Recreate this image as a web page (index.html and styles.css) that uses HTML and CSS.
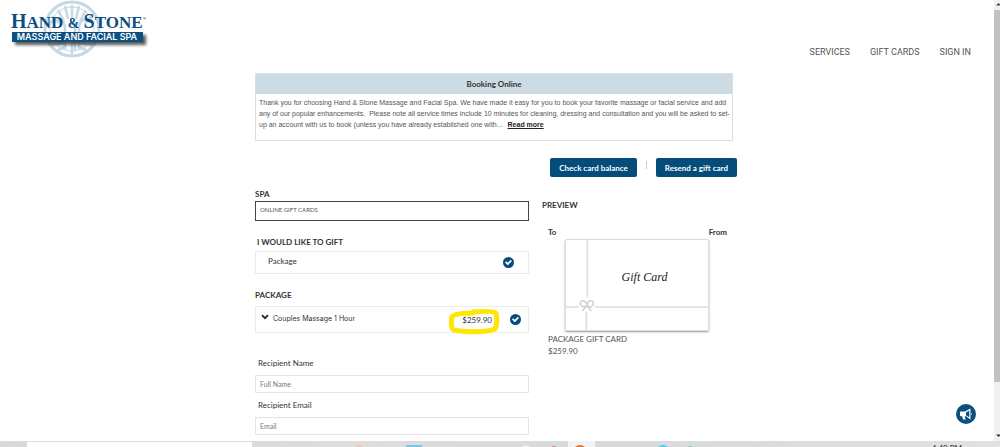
FILE: index.html
```html
<!DOCTYPE html>
<html lang="en">
<head>
<meta charset="utf-8">
<meta name="viewport" content="width=device-width, initial-scale=1">
<title>Hand &amp; Stone Gift Cards</title>
<link rel="stylesheet" href="styles.css">
</head>
<body>
<div class="viewport">
  <div class="page">
    <header class="header">
      <a class="logo" href="#" aria-label="Hand and Stone Massage and Facial Spa">
        <svg width="152" height="62" viewBox="0 0 152 62">
          <defs>
            <filter id="shadow" x="-10%" y="-30%" width="125%" height="200%">
              <feDropShadow dx="3" dy="3" stdDeviation="1.5" flood-color="#222" flood-opacity=".75"/>
            </filter>
          </defs>
          <g fill="none" stroke="#c6d8e4">
            <circle cx="72" cy="29" r="27" stroke-width="3"/>
            <circle cx="72" cy="29" r="22" stroke-width="1"/>
            <path stroke-width="2.5" d="M72 5v14M65 6l3 13M79 6l-3 13M58 10l6 11M86 10l-6 11M52 16l7 7M92 16l-7 7M50 23c8-7 14-3 15 4v22M94 23c-8-7-14-3-15 4v22M69 24h6v26M50 45l14-2M94 45l-14-2M58 50l7-3M86 50l-7-3M72 43v11"/>
          </g>
          <rect x="12" y="32" width="131" height="10" fill="#0b4f80" filter="url(#shadow)"/>
          <text class="logo-name" x="11" y="28"><tspan class="logo-cap">H</tspan>AND <tspan class="logo-amp">&amp;</tspan> <tspan class="logo-cap">S</tspan>TONE<tspan class="logo-reg" dy="-8">®</tspan></text>
          <text class="logo-tag" x="77" y="40" text-anchor="middle">MASSAGE AND FACIAL SPA</text>
        </svg>
      </a>
      <nav class="nav">
        <a href="#">SERVICES</a>
        <a href="#">GIFT CARDS</a>
        <a href="#">SIGN IN</a>
      </nav>
    </header>

    <main class="content">
      <section class="notice">
        <h1 class="notice-title">Booking Online</h1>
        <p class="notice-text">Thank you for choosing Hand &amp; Stone Massage and Facial Spa. We have made it easy for you to book your favorite massage or facial service and add any of our popular enhancements.&nbsp; Please note all service times include 10 minutes for cleaning, dressing and consultation and you will be asked to set-up an account with us to book (unless you have already established one with... <a class="read-more" href="#">Read more</a></p>
      </section>

      <div class="actions">
        <button class="btn" type="button">Check card balance</button>
        <span class="divider"></span>
        <button class="btn" type="button">Resend a gift card</button>
      </div>

      <div class="columns">
        <form class="form">
          <label class="heading" for="spa">SPA</label>
          <input class="field field-spa" id="spa" type="text" value="ONLINE GIFT CARDS">

          <h2 class="heading heading-gift">I WOULD LIKE TO GIFT</h2>
          <div class="option option-gift">
            <label for="gift-package">Package</label>
            <input class="tick" id="gift-package" type="checkbox" checked>
          </div>

          <h2 class="heading heading-package">PACKAGE</h2>
          <div class="option option-package">
            <button class="expand" type="button" aria-label="Show details">
              <svg width="8" height="6" viewBox="0 0 8 6"><path d="M1 1.200l3 3 3-3" fill="none" stroke="#222" stroke-width="1.8"/></svg>
            </button>
            <label class="option-name" for="couples">Couples Massage 1 Hour</label>
            <span class="price">
              <svg class="marker" width="52" height="28" viewBox="0 0 52 28"><path d="M25 4C37 3 47 3 48 5c1 5 1 13-1 16-8 4-32 3-41 1C3 21 3 12 4 9c2-3 10-4 21-4" fill="none" stroke="#ffe600" stroke-width="5" stroke-linejoin="round" stroke-linecap="round"/></svg>
              <span class="amount">$259.90</span>
            </span>
            <input class="tick" id="couples" type="checkbox" checked>
          </div>

          <label class="label" for="name">Recipient Name</label>
          <input class="field" id="name" type="text" placeholder="Full Name">
          <label class="label label-email" for="email">Recipient Email</label>
          <input class="field" id="email" type="email" placeholder="Email">
        </form>

        <section class="preview">
          <h2 class="heading">PREVIEW</h2>
          <div class="names"><span>To</span><span>From</span></div>
          <div class="gift-card">
            <svg class="ribbon" viewBox="0 0 143 91">
              <g fill="none" stroke="#dedede" stroke-width="1.6">
                <path d="M21.500 0V58M20.500 72V91M0 67.500H13M29 67.500H143"/>
                <path stroke="#d0d0d0" stroke-width="1.5" d="M21 66C17 69 14 66 14.500 63.500C15 60 20 60 21 66C22 60 27 60 27.500 63.500C28 66 25 69 21 66L16.500 71.500M21 66L25.500 71.500"/>
              </g>
            </svg>
            <span class="script">Gift Card</span>
          </div>
          <p class="summary">PACKAGE GIFT CARD</p>
          <p class="summary">$259.90</p>
        </section>
      </div>
    </main>

    <button class="announce" type="button" aria-label="Announcements">
      <svg width="20" height="20" viewBox="0 0 20 20"><circle cx="10" cy="10" r="10" fill="#0b4f80"/><path fill="#fff" d="M4 8.200Q4 7.500 4.700 7.500H9L14.500 4.500V15.500L10 12.300H8.600L9.700 15.600H7.200L6.100 12.300H4.700Q4 12.300 4 11.600zM15 8.600q1.500 1.400 0 2.800z"/><path fill="#0b4f80" d="M10 8.500l3.300-1.800v6.600L10 11.300z"/></svg>
    </button>
  </div>
  <div class="scrollbar">
    <svg width="6" height="10" viewBox="0 0 6 10"><path d="M2 5.500L4.500 3 7 5.500z" fill="#444"/></svg>
    <div class="thumb"></div>
    <svg width="6" height="10" viewBox="0 0 6 10"><path d="M2 3.500h5L4.500 6z" fill="#333"/></svg>
  </div>
</div>
<footer class="taskbar">
  <div class="search"></div>
  <svg class="apps" width="620" height="6" viewBox="0 0 620 6">
    <rect x="316" width="27" height="6" fill="#f3f3f3"/>
    <rect x="154" y="4" width="16" height="2" rx="1" fill="#7fc3e3"/>
    <circle cx="328" cy="11" r="7" fill="#e2733d"/>
    <circle cx="411" cy="11" r="7" fill="#5ecbe0"/>
    <circle cx="438" cy="9" r="4" fill="#8fcf9a"/>
    <circle cx="302" cy="8" r="3" fill="#dc7d76"/>
    <circle cx="274" cy="8" r="4" fill="#eef1f2"/>
    <circle cx="107" cy="8" r="4" fill="#e9c8b8"/>
  </svg>
  <span class="clock">4:49 PM</span>
</footer>
</body>
</html>
```

FILE: styles.css
```css
* {
  box-sizing: border-box;
}

body {
  margin: 0;
  height: 100vh;
  display: flex;
  flex-direction: column;
  overflow: hidden;
  background: #fff;
  color: #333;
  font-family: Lato, "Liberation Sans", sans-serif;
  font-size: 8px;
  line-height: 12px;
}

h1,
h2,
p {
  margin: 0;
}

button,
input {
  font: inherit;
  margin: 0;
}

.viewport {
  flex: 1;
  min-height: 0;
  display: flex;
}

.page {
  position: relative;
  flex: 1;
  overflow: hidden;
}

.header {
  display: flex;
  justify-content: space-between;
  align-items: flex-end;
  height: 62px;
  padding-right: 23px;
}

.logo {
  display: flex;
}

.logo-name {
  font: bold 17px "Liberation Serif", serif;
  fill: #0b4f80;
}

.logo-cap {
  font-size: 20px;
}

.logo-amp {
  font-size: 14px;
}

.logo-reg {
  font-size: 5px;
}

.logo-tag {
  font: 600 9px Inter, sans-serif;
  fill: #fff;
}

.nav {
  display: flex;
  gap: 20px;
  padding-bottom: 4px;
  font-family: Roboto, sans-serif;
  font-size: 9px;
}

.nav a {
  color: #555;
  text-decoration: none;
}

.content {
  max-width: 484px;
  margin: 11px auto 0;
}

.notice {
  margin-right: 6px;
  border: 1px solid #d5e1e9;
}

.notice-title {
  background: #cddbe4;
  font-size: 8px;
  line-height: 20px;
  text-align: center;
}

.notice-text {
  min-height: 46px;
  padding: 3px 0 9px 3px;
  font-family: "Liberation Sans", sans-serif;
  font-size: 7px;
  line-height: 11px;
  color: #555;
}

.read-more {
  margin-left: 3px;
  color: #222;
  font-weight: bold;
}

.actions {
  display: flex;
  justify-content: flex-end;
  gap: 9px;
  padding-right: 2px;
  margin-top: 17px;
}

.btn {
  height: 19px;
  padding: 0 9px;
  border: 0;
  border-radius: 2px;
  background: #044c7a;
  color: #fff;
  font-weight: bold;
}

.divider {
  width: 1px;
  height: 8px;
  margin-top: 3px;
  background: #bfcbe0;
}

.columns {
  display: flex;
  gap: 13px;
  margin-top: 11px;
}

.form {
  flex: 274;
  display: flex;
  flex-direction: column;
}

.heading {
  font-size: 8px;
  font-weight: bold;
  line-height: 12px;
}

.field {
  width: 100%;
  height: 18px;
  padding: 0 4px;
  border: 1px solid #e4e4e4;
  background: #fff;
  color: #555;
  font-size: 7px;
}

.field::placeholder {
  color: #777;
}

.field-spa {
  height: 20px;
  margin-top: 1px;
  padding-bottom: 4px;
  border-color: #444;
  font-size: 6px;
}

.heading-gift {
  margin-top: 15px;
  padding-left: 2px;
}

.heading-package {
  margin-top: 15px;
}

.option {
  display: flex;
  align-items: center;
  border: 1px solid #ececec;
}

.option-gift {
  justify-content: space-between;
  height: 23px;
  margin-top: 3px;
  padding: 0 14px 0 12px;
}

.option-gift label {
  padding-bottom: 3px;
}

.option-package {
  height: 27px;
  margin-top: 5px;
  padding: 0 7px 0 5px;
}

.option-name {
  flex: 1;
  padding: 0 0 2px 4px;
  font-family: Inter, sans-serif;
  font-size: 7px;
}

.expand {
  display: flex;
  padding: 0 0 5px;
  border: 0;
  background: none;
}

.price {
  position: relative;
  margin-right: 18px;
}

.amount {
  position: relative;
}

.marker {
  position: absolute;
  left: -14px;
  top: -6px;
}

.tick {
  appearance: none;
  display: grid;
  place-items: center;
  width: 11px;
  height: 11px;
  border-radius: 50%;
  background: #044c7a;
}

.tick:checked::before {
  content: "";
  width: 7px;
  height: 6px;
  background: #fff;
  clip-path: polygon(0 50%, 18% 30%, 40% 54%, 82% 5%, 100% 24%, 40% 95%);
}

.label {
  margin: 24px 0 6px;
  padding-left: 3px;
}

.label-email {
  margin-top: 6px;
}

.preview {
  flex: 197;
  padding-top: 11px;
}

.names {
  display: flex;
  justify-content: space-between;
  margin-top: 15px;
  padding: 0 12px 0 6px;
  font-weight: bold;
}

.gift-card {
  position: relative;
  display: grid;
  place-items: center;
  width: 144px;
  height: 92px;
  margin: 1px 0 2px 23px;
  border: 1px solid #ddd;
  border-radius: 2px;
  box-shadow: 0 1px 2px #999;
}

.ribbon {
  position: absolute;
  inset: 0;
}

.script {
  position: relative;
  padding: 0 0 15px 15px;
  color: #222;
  font: italic 12px "Liberation Serif", serif;
}

.summary {
  padding-left: 6px;
  color: #555;
}

.announce {
  position: absolute;
  right: 18px;
  bottom: 17px;
  display: flex;
  padding: 0;
  border: 0;
  background: none;
}

.scrollbar {
  display: flex;
  flex-direction: column;
  width: 6px;
  background: #f1f1f1;
}

.thumb {
  height: 372px;
  margin-bottom: auto;
  background: #c1c1c1;
}

.taskbar {
  display: flex;
  height: 6px;
  overflow: hidden;
  background: linear-gradient(90deg, #d5d9dc, #dddddb 35%, #d6dadd 60%, #dfe1e3);
}

.search {
  width: 225px;
  margin-left: 27px;
  border-top: 1px solid #ddd;
  background: #fff;
}

.clock {
  margin-left: auto;
  padding: 1px 38px 0 0;
  color: #222;
}
```
